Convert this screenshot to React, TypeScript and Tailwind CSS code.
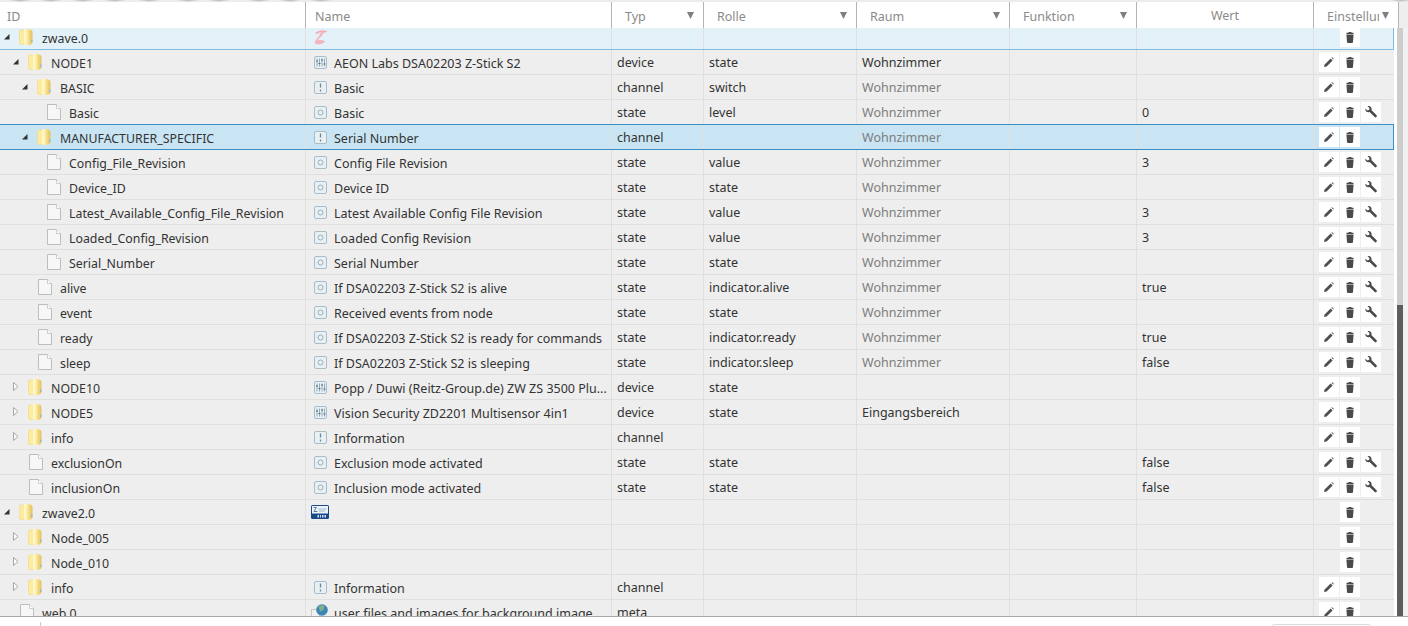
const COLS = "grid grid-cols-[306px_306px_92px_153px_153px_127px_177px_80px]";
const HCOLS = "grid grid-cols-[306px_306px_92px_153px_153px_127px_177px_85px]";
const Cell = ({ children, className = "" }: { children?: React.ReactNode; className?: string }) => (
  <div className={`flex items-center overflow-hidden whitespace-nowrap border-r border-[#e0e0e0] ${className}`}>{children}</div>
);

const Folder = () => (
  <svg width="14" height="16" viewBox="0 0 14 16" className="shrink-0">
    <defs>
      <linearGradient id="fg" x1="0" x2="1" y1="0" y2="0">
        <stop offset="0" stopColor="#fffbd8" />
        <stop offset="0.35" stopColor="#fdeeaa" />
        <stop offset="0.55" stopColor="#f6dc84" />
        <stop offset="1" stopColor="#e4c060" />
      </linearGradient>
    </defs>
    <path d="M.5 2 Q.5 1 1.500 1 H5 L6.500 2 V15.500 H2.500 Q.5 15.500 .5 14z" fill="#fcec9f" stroke="#ecd27c" strokeWidth="0.500" />
    <path d="M5 .5 Q5 0 6 0 H9 Q13.500 .5 13.500 3 V13 Q13.500 15.500 10 15.800 L5.500 15.800 Q5 15.800 5 15z" fill="url(#fg)" />
    <path d="M12 10.500h1.500v2.500H12z" fill="#8bbfe0" />
  </svg>
);
const FileIcon = () => (
  <svg width="14" height="16" viewBox="0 0 14 16" className="shrink-0">
    <path d="M.5.5 H9.500 L13.500 4.500 V15.500 H.5z" fill="#f7f7f7" stroke="#bdbdbd" />
    <path d="M9.500.5 V4.500 H13.500" fill="#fff" stroke="#cdcdcd" />
  </svg>
);
const Tri = ({ open }: { open?: boolean }) =>
  open ? (
    <svg width="6" height="6" viewBox="0 0 6 6" className="shrink-0"><path d="M0 5.500 L5.500 0 V5.500z" fill="#333" /></svg>
  ) : (
    <svg width="6" height="9" viewBox="0 0 6 9" className="shrink-0"><path d="M.5.5 L5 4.500 L.5 8.500z" fill="#fff" stroke="#a6a6a6" /></svg>
  );

const Frame = ({ children }: { children: React.ReactNode }) => (
  <svg width="13" height="13" viewBox="0 0 13 13" className="shrink-0">
    <rect x=".5" y=".5" width="12" height="12" rx="1.500" fill="#e9f0f4" stroke="#a9bdc9" />
    {children}
  </svg>
);
const DeviceIc = () => (
  <Frame>
    <path d="M3 2.500v8M5.500 2.500v8M8 2.500v8M10.500 2.500v8" stroke="#88a2b0" strokeWidth="0.900" />
    <path d="M2 5h2M4.500 7.500h2M7 4h2M9.500 8h2" stroke="#4d6c7e" strokeWidth="1.100" />
  </Frame>
);
const ChannelIc = () => (
  <Frame>
    <path d="M6.500 2.500v4M6.500 8.500v2" stroke="#6a8999" strokeWidth="1.300" />
  </Frame>
);
const StateIc = () => (
  <Frame>
    <circle cx="6.500" cy="6.500" r="2.500" fill="none" stroke="#95aebb" />
  </Frame>
);
const ZLogo = () => (
  <svg width="14" height="15" viewBox="0 0 14 15" className="shrink-0">
    <path d="M3 3.500 Q7 0 12 1.500 Q8 3 7 5" fill="none" stroke="#f2aab5" strokeWidth="1.800" />
    <path d="M9.500 4 Q6 7 3.500 10.500" fill="none" stroke="#f4b9c2" strokeWidth="2" />
    <path d="M1.500 11 Q7 9 12.500 11.500 Q8 15.500 2.500 14" fill="#f4b4be" />
  </svg>
);
const ZPlus = () => (
  <svg width="18" height="14" viewBox="0 0 18 14" className="shrink-0">
    <rect width="18" height="14" rx="1.500" fill="#1a4a86" />
    <rect x="1" y="1" width="16" height="7.500" fill="#eef3f8" />
    <path d="M2.500 2.500h3L3 6.500H6.500" stroke="#4a6f9c" fill="none" strokeWidth="0.900" />
    <path d="M7.500 4h8M8 6h6" stroke="#8aa3bf" strokeWidth="0.800" />
    <path d="M6.500 10h1.500v2.500H6.500zM9 10h1v2.500H9zM11 10h1.500v2.500H11zM13.500 10h1.500v2.500h-1.500z" fill="#cfe0f2" />
  </svg>
);
const Globe = () => (
  <svg width="17" height="16" viewBox="0 0 17 16" className="shrink-0">
    <rect x=".5" y="5.500" width="8" height="10" fill="#f1f1f1" stroke="#c8c8c8" />
    <circle cx="11" cy="6" r="5.800" fill="#3f86b8" />
    <path d="M7.500 2.500 Q11 .5 13.500 2 L12.500 6 L9 7.500z" fill="#7fb08c" />
  </svg>
);

const Pencil = () => (
  <svg width="10" height="10" viewBox="0 0 10 10">
    <path d="M0 10 L.6 7.400 L6.600 1.400 L8.600 3.400 L2.600 9.400z" fill="#4f4f4f" />
    <path d="M7.400.7 L8.200.2 L9.800 1.800 L9.300 2.600z" fill="#4f4f4f" />
  </svg>
);
const Trash = () => (
  <svg width="8" height="11" viewBox="0 0 8 11">
    <path d="M2.500 0h3v.8H7.500V2H.5V.8h2z M.4 2.600h7.200L7 10q0 1-1 1H2q-1 0-1-1z" fill="#4a4a4a" />
  </svg>
);
const Wrench = () => (
  <svg width="12" height="12" viewBox="0 0 12 12">
    <path d="M.3 2.700 L2.500 4.500 L4.300 3.800 L4.400 2 L2.500.3 Q4.500-.4 5.800 1 Q7 2.300 6.400 4 L11.600 9.200 Q12.200 9.900 11.500 10.800 Q10.600 11.800 9.700 11.100 L4.600 6 Q2.600 6.600 1.200 5.400 Q0 4.200.3 2.700z" fill="#4a4a4a" />
  </svg>
);
const Btn = ({ children, hidden }: { children?: React.ReactNode; hidden?: boolean }) => (
  <span className={`flex w-[20px] h-[20px] items-center justify-center ${hidden ? "" : "bg-white"}`}>{children}</span>
);

type R = {
  lv: number; label: string; kind: "open" | "closed" | "file";
  icon?: "device" | "channel" | "state" | "z" | "zplus" | "globe"; name?: string;
  typ?: string; rolle?: string; raum?: string; dim?: boolean; wert?: string;
  btn: "dt" | "pdt" | "t"; sel?: "light" | "strong";
};
const W = "Wohnzimmer";
const rows: R[] = [
  { lv: 0, label: "zwave.0", kind: "open", icon: "z", btn: "t", sel: "light" },
  { lv: 1, label: "NODE1", kind: "open", icon: "device", name: "AEON Labs DSA02203 Z-Stick S2", typ: "device", rolle: "state", raum: W, btn: "dt" },
  { lv: 2, label: "BASIC", kind: "open", icon: "channel", name: "Basic", typ: "channel", rolle: "switch", raum: W, dim: true, btn: "dt" },
  { lv: 3, label: "Basic", kind: "file", icon: "state", name: "Basic", typ: "state", rolle: "level", raum: W, dim: true, wert: "0", btn: "pdt" },
  { lv: 2, label: "MANUFACTURER_SPECIFIC", kind: "open", icon: "channel", name: "Serial Number", typ: "channel", raum: W, dim: true, btn: "dt", sel: "strong" },
  { lv: 3, label: "Config_File_Revision", kind: "file", icon: "state", name: "Config File Revision", typ: "state", rolle: "value", raum: W, dim: true, wert: "3", btn: "pdt" },
  { lv: 3, label: "Device_ID", kind: "file", icon: "state", name: "Device ID", typ: "state", rolle: "state", raum: W, dim: true, btn: "pdt" },
  { lv: 3, label: "Latest_Available_Config_File_Revision", kind: "file", icon: "state", name: "Latest Available Config File Revision", typ: "state", rolle: "value", raum: W, dim: true, wert: "3", btn: "pdt" },
  { lv: 3, label: "Loaded_Config_Revision", kind: "file", icon: "state", name: "Loaded Config Revision", typ: "state", rolle: "value", raum: W, dim: true, wert: "3", btn: "pdt" },
  { lv: 3, label: "Serial_Number", kind: "file", icon: "state", name: "Serial Number", typ: "state", rolle: "state", raum: W, dim: true, btn: "pdt" },
  { lv: 2, label: "alive", kind: "file", icon: "state", name: "If DSA02203 Z-Stick S2 is alive", typ: "state", rolle: "indicator.alive", raum: W, dim: true, wert: "true", btn: "pdt" },
  { lv: 2, label: "event", kind: "file", icon: "state", name: "Received events from node", typ: "state", rolle: "state", raum: W, dim: true, btn: "pdt" },
  { lv: 2, label: "ready", kind: "file", icon: "state", name: "If DSA02203 Z-Stick S2 is ready for commands", typ: "state", rolle: "indicator.ready", raum: W, dim: true, wert: "true", btn: "pdt" },
  { lv: 2, label: "sleep", kind: "file", icon: "state", name: "If DSA02203 Z-Stick S2 is sleeping", typ: "state", rolle: "indicator.sleep", raum: W, dim: true, wert: "false", btn: "pdt" },
  { lv: 1, label: "NODE10", kind: "closed", icon: "device", name: "Popp / Duwi (Reitz-Group.de) ZW ZS 3500 Plu...", typ: "device", rolle: "state", btn: "dt" },
  { lv: 1, label: "NODE5", kind: "closed", icon: "device", name: "Vision Security ZD2201 Multisensor 4in1", typ: "device", rolle: "state", raum: "Eingangsbereich", btn: "dt" },
  { lv: 1, label: "info", kind: "closed", icon: "channel", name: "Information", typ: "channel", btn: "dt" },
  { lv: 1, label: "exclusionOn", kind: "file", icon: "state", name: "Exclusion mode activated", typ: "state", rolle: "state", wert: "false", btn: "pdt" },
  { lv: 1, label: "inclusionOn", kind: "file", icon: "state", name: "Inclusion mode activated", typ: "state", rolle: "state", wert: "false", btn: "pdt" },
  { lv: 0, label: "zwave2.0", kind: "open", icon: "zplus", btn: "t" },
  { lv: 1, label: "Node_005", kind: "closed", btn: "t" },
  { lv: 1, label: "Node_010", kind: "closed", btn: "t" },
  { lv: 1, label: "info", kind: "closed", icon: "channel", name: "Information", typ: "channel", btn: "dt" },
  { lv: 0, label: "web.0", kind: "file", icon: "globe", name: "user files and images for background image", typ: "meta", btn: "dt" },
];

const Indent: Record<number, string> = { 0: "pl-[4px]", 1: "pl-[13px]", 2: "pl-[22px]", 3: "pl-[31px]" };
const FileIndent: Record<number, string> = { 0: "pl-[20px]", 1: "pl-[29px]", 2: "pl-[38px]", 3: "pl-[47px]" };

const NameIcon = ({ k }: { k?: R["icon"] }) => {
  if (k === "device") return <span className="ml-[8px] mr-[7px] flex"><DeviceIc /></span>;
  if (k === "channel") return <span className="ml-[8px] mr-[7px] flex"><ChannelIc /></span>;
  if (k === "state") return <span className="ml-[8px] mr-[7px] flex"><StateIc /></span>;
  if (k === "z") return <span className="ml-[7px] flex"><ZLogo /></span>;
  if (k === "zplus") return <span className="ml-[5px] flex"><ZPlus /></span>;
  if (k === "globe") return <span className="ml-[5px] mr-[6px] flex"><Globe /></span>;
  return null;
};

const Row = ({ r }: { r: R }) => {
  const rowCls =
    r.sel === "strong"
      ? "bg-[#c9e5f4] border-y border-[#3c8fc4] h-[26px] -mt-[1px] relative shadow-[inset_-1px_0_0_#3c8fc4]"
      : r.sel === "light"
      ? "bg-[#e3f1f9] border-b border-[#80bde0] h-[25px] shadow-[inset_-1px_0_0_#80bde0]"
      : "bg-[#eeeeee] border-b border-[#dfdfdf] h-[25px]";
  const rolleCol = r.dim ? "text-[#7d7d7d]" : "";
  return (
    <div className={`${COLS} w-[1394px] text-[#333] ${rowCls}`}>
      <Cell className="text-[12.35px]">
        {r.kind === "file" ? (
          <span className={`flex items-center gap-[8px] ${FileIndent[r.lv]}`}>
            <FileIcon />
            <span className="pt-[4px]">{r.label}</span>
          </span>
        ) : (
          <span className={`flex items-center ${Indent[r.lv]}`}>
            <span className="w-[15px] flex items-center"><Tri open={r.kind === "open"} /></span>
            <Folder />
            <span className="ml-[9px] pt-[4px]">{r.label}</span>
          </span>
        )}
      </Cell>
      <Cell>
        <NameIcon k={r.icon} />
        <span className="pt-[4px]">{r.name}</span>
      </Cell>
      <Cell className="pl-[5px] pt-[2px]">{r.typ}</Cell>
      <Cell className="pl-[5px] pt-[2px]">{r.rolle}</Cell>
      <Cell className={`pl-[5px] pt-[2px] ${rolleCol}`}>{r.raum}</Cell>
      <Cell />
      <Cell className="pl-[5px] pt-[2px]">{r.wert}</Cell>
      <Cell className="pl-[5px] gap-[1px] border-r-0">
        <Btn hidden={r.btn === "t"}>{r.btn !== "t" && <Pencil />}</Btn>
        <Btn><Trash /></Btn>
        {r.btn === "pdt" && <Btn><Wrench /></Btn>}
      </Cell>
    </div>
  );
};

const Arrow = () => (
  <svg width="7" height="7" viewBox="0 0 7 7" className="absolute right-[9px] top-[10px]"><path d="M0 0h7L3.500 7z" fill="#7f7f7f" /></svg>
);
const Head = ({ children, arrow = true, className = "" }: { children?: React.ReactNode; arrow?: boolean; className?: string }) => (
  <div className={`relative flex items-center overflow-hidden whitespace-nowrap border-r border-[#b4b4b4] ${className}`}>
    {children}
    {arrow && <Arrow />}
  </div>
);

const bump = "h-[2px] w-[22px] shrink-0 bg-[radial-gradient(ellipse_at_center_top,#b4b4b4,transparent_70%)]";

export default function App() {
  return (
    <div className="relative flex h-[626px] w-[1408px] flex-col overflow-hidden bg-white text-[12.5px] font-['Noto_Sans','Open_Sans',sans-serif]">
      <div className="flex h-[2px] w-full bg-[#ececec] pl-[9px]">
        <span className={bump} />
        <span className={`${bump} ml-[9px]`} />
        <span className={`${bump} ml-[10px]`} />
        <span className={`${bump} ml-[10px]`} />
        <span className={`${bump} ml-[12px]`} />
        <span className={`${bump} ml-[17px]`} />
        <span className={`${bump} ml-[9px]`} />
        <span className={`${bump} ml-[18px]`} />
        <span className={`${bump} ml-[9px]`} />
        <span className={`${bump} ml-[9px]`} />
        <span className={`${bump} ml-[1058px]`} />
      </div>
      <div className="flex h-[26px] w-full">
        <div className={`${HCOLS} h-[26px] w-[1399px] bg-white text-[#8a8a8a]`}>
          <Head arrow={false} className="pl-[7px] pt-[4px]">ID</Head>
          <Head arrow={false} className="pl-[9px] pt-[4px]">Name</Head>
          <Head className="pl-[13px] pt-[4px]">Typ</Head>
          <Head className="pl-[13px] pt-[4px]">Rolle</Head>
          <Head className="pl-[13px] pt-[4px]">Raum</Head>
          <Head className="pl-[13px] pt-[4px]">Funktion</Head>
          <Head arrow={false} className="justify-center pt-[2px]">Wert</Head>
          <Head className="pl-[13px] pt-[4px]">
            <span className="w-[52px] overflow-hidden">Einstellungen</span>
          </Head>
        </div>
        <div className="h-full flex-1 bg-[#eeeeee]" />
      </div>
      <div className="relative h-[588px] w-full overflow-hidden">
        <div className="-mt-[3px]">
          {rows.map((r, i) => <Row key={i} r={r} />)}
        </div>
        <div className="absolute left-[1397px] top-0 h-full w-[6px] bg-[#cdcdcd]">
          <div className="absolute left-0 top-[277px] bottom-0 w-full bg-[#5d5d5d]" />
        </div>
        <div className="absolute left-[1403px] top-0 h-full w-[5px] bg-[#f1f1f1]" />
      </div>
      <div className="relative h-[10px] border-t border-[#a9a9a9] bg-white">
        <div className="absolute left-[40px] top-[5px] h-[5px] w-px bg-[#ccc]" />
        <div className="absolute left-[1270px] top-[7px] h-[6px] w-[103px] rounded-t-[5px] border border-[#ddd]" />
      </div>
    </div>
  );
}
